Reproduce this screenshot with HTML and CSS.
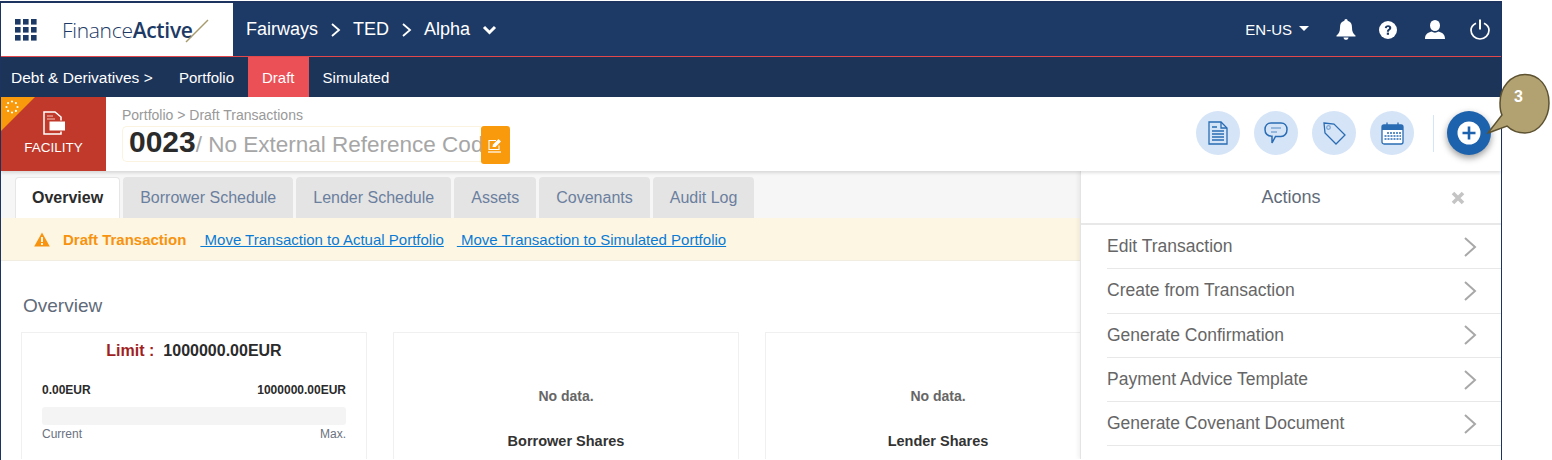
FILE: index.html
```html
<!DOCTYPE html>
<html>
    <head>
        <title>FinanceActive - Draft Transactions</title>
        <link rel="stylesheet" href="styles.css">
    </head>
    <body>
        <div class="frame">
            <div class="top_bar">
                <div class="logo_box">
                    <svg class="apps_icon" width="22" height="22" viewBox="0 0 22 22" fill="#1d3a66">
                        <rect x="0" y="0" width="5.6" height="5.6"/><rect x="8" y="0" width="5.6" height="5.6"/><rect x="16" y="0" width="5.6" height="5.6"/>
                        <rect x="0" y="8" width="5.6" height="5.6"/><rect x="8" y="8" width="5.6" height="5.6"/><rect x="16" y="8" width="5.6" height="5.6"/>
                        <rect x="0" y="16" width="5.6" height="5.6"/><rect x="8" y="16" width="5.6" height="5.6"/><rect x="16" y="16" width="5.6" height="5.6"/>
                    </svg>
                    <div class="logo_text">Finance<b>Active</b></div>
                    <svg class="logo_slash" width="24" height="24" viewBox="0 0 24 24"><path d="M1 23 L23 1" stroke="#a89a6c" stroke-width="1.4"/></svg>
                </div>
                <div class="crumbs">
                    <span>Fairways</span>
                    <svg width="11" height="16" viewBox="0 0 11 16"><path d="M2 2 L9 8 L2 14" fill="none" stroke="#fff" stroke-width="1.8"/></svg>
                    <span>TED</span>
                    <svg width="11" height="16" viewBox="0 0 11 16"><path d="M2 2 L9 8 L2 14" fill="none" stroke="#fff" stroke-width="1.8"/></svg>
                    <span>Alpha</span>
                    <svg width="15" height="10" viewBox="0 0 15 10"><path d="M2 2 L7.5 7.5 L13 2" fill="none" stroke="#fff" stroke-width="3"/></svg>
                </div>
                <div class="top_tools">
                    <span class="lang">EN-US</span>
                    <span class="caret"></span>
                    <svg class="bell" width="20" height="21" viewBox="0 0 20 21" fill="#fff"><path d="M10 0 C11 0 11.6 .8 11.6 1.8 C14.8 2.6 16 5 16 8.5 C16 12.5 17 14.500 19.500 16.500 L19.500 17.500 L.5 17.500 L.5 16.500 C3 14.500 4 12.500 4 8.500 C4 5 5.200 2.600 8.400 1.800 C8.400 .8 9 0 10 0 Z"/><path d="M7.500 18.500 L12.500 18.500 C12.300 20 11.300 20.800 10 20.800 C8.700 20.800 7.700 20 7.500 18.500 Z"/></svg>
                    <svg class="help" width="18" height="18" viewBox="0 0 18 18"><circle cx="9" cy="9" r="9" fill="#fff"/><path d="M5.800 7 C5.900 5.200 7.300 4.300 9.100 4.300 C11 4.300 12.300 5.400 12.300 6.900 C12.300 8.900 9.900 8.900 9.900 10.700 L7.900 10.700 C7.900 8 10.100 8.200 10.100 7 C10.100 6.400 9.700 6 9 6 C8.300 6 7.900 6.500 7.800 7.200 Z" fill="#1d3a66"/><rect x="7.800" y="11.600" width="2.200" height="2.200" fill="#1d3a66"/></svg>
                    <svg class="user" width="20" height="19" viewBox="0 0 20 19" fill="#fff"><ellipse cx="10" cy="5.500" rx="5" ry="5.500"/><path d="M0 19 C0 14 3 12.500 6.500 11.500 C8.500 13 11.500 13 13.500 11.500 C17 12.500 20 14 20 19 Z"/></svg>
                    <svg class="power" width="20" height="21" viewBox="0 0 20 21"><path d="M6 4.200 C3 5.600 1 8 1 11.300 C1 16 5 20 10 20 C15 20 19 16 19 11.300 C19 8 17 5.600 14 4.200" fill="none" stroke="#fff" stroke-width="1.700"/><path d="M10 .5 L10 10.500" stroke="#fff" stroke-width="2"/></svg>
                </div>
            </div>
            <div class="nav_bar">
                <span class="nav_root">Debt &amp; Derivatives &gt;</span>
                <span class="nav_item">Portfolio</span>
                <span class="nav_item nav_active">Draft</span>
                <span class="nav_item">Simulated</span>
            </div>
            <div class="sub_head">
                <div class="type_tile">
                    <span class="corner"></span>
                    <svg class="spinner" width="14" height="14" viewBox="0 0 14 14" fill="#fff">
                        <circle cx="7" cy="1.500" r="1.100"/><circle cx="10.900" cy="3.100" r="1.100"/><circle cx="12.500" cy="7" r="1.100"/><circle cx="10.900" cy="10.900" r="1.100"/>
                        <circle cx="7" cy="12.500" r="1.100"/><circle cx="3.100" cy="10.900" r="1.100"/><circle cx="1.500" cy="7" r="1.100"/><circle cx="3.100" cy="3.100" r="1.100"/>
                    </svg>
                    <svg width="24" height="24" viewBox="0 0 24 24">
                        <path d="M2 1 L13 1 L19 6 L19 23 L2 23 Z" fill="none" stroke="#fff" stroke-width="1.500"/>
                        <path d="M5 5 L11 5 M5 8 L13 8" stroke="#f3c8c0" stroke-width="1"/>
                        <rect x="7" y="10" width="16.500" height="10" fill="#fff" stroke="#c0392b" stroke-width="1"/>
                    </svg>
                    <span class="tile_label">FACILITY</span>
                </div>
                <div class="title_box">
                    <div class="path_text">Portfolio &gt; Draft Transactions</div>
                    <div class="ref_row">
                        <div class="ref_field"><b>0023</b><span>/ No External Reference Code</span></div>
                        <div class="edit_btn">
                            <svg width="15" height="15" viewBox="0 0 15 15" fill="none" stroke="#fff" stroke-width="1.100"><path d="M11 7.500 L11 11.500 L1 11.500 L1 2.500 L8 2.500"/><path d="M4.500 9 L5 6.500 L10.500 1 L13 3.500 L7.500 9 Z" fill="#fff" stroke="none"/><path d="M0 14 L13 14" stroke-width="1.200"/></svg>
                        </div>
                    </div>
                </div>
                <div class="round_tools">
                    <span class="round_btn">
                        <svg width="20" height="24" viewBox="0 0 20 24" fill="none" stroke="#2a6cb4" stroke-width="1.300"><path d="M1 1 L13 1 L19 7 L19 23 L1 23 Z"/><path d="M13 1 L13 7 L19 7"/><path d="M4 6 L9 6 M4 10 L16 10 M4 13 L16 13 M4 16 L16 16 M4 19 L16 19"/></svg>
                    </span>
                    <span class="round_btn">
                        <svg width="24" height="23" viewBox="0 0 24 23" fill="none" stroke="#2a6cb4" stroke-width="1.500"><path d="M7 1 L17 1 C20.500 1 23 3.500 23 7.500 C23 11.500 20.500 14.500 17 14.500 L11.500 14.500 L8 21 L8 14.300 C3.500 14 1 11.500 1 7.500 C1 3.500 3.500 1 7 1 Z"/><path d="M7 6 L17 6 M7 10 L13 10" stroke="#7fa8d6"/></svg>
                    </span>
                    <span class="round_btn">
                        <svg width="23" height="23" viewBox="0 0 23 23" fill="none" stroke="#2a6cb4" stroke-width="1.300"><path d="M1 1 L11 2 L22 13 L13 22 L2 11 Z"/><circle cx="5.500" cy="5.500" r="1.800" stroke="#7fa8d6"/></svg>
                    </span>
                    <span class="round_btn">
                        <svg width="23" height="23" viewBox="0 0 23 23"><rect x="1" y="3" width="21" height="19" rx="2" fill="#fff" stroke="#2a6cb4" stroke-width="1.300"/><rect x="1" y="3" width="21" height="5" fill="#2a6cb4"/><path d="M6 .5 L6 5 M17 .5 L17 5" stroke="#2a6cb4" stroke-width="1.300"/><path d="M6 11 L20 11 M3.500 14 L20 14 M3.500 17 L20 17" stroke="#2a6cb4" stroke-width="1.400" stroke-dasharray="2 1"/></svg>
                    </span>
                    <span class="tool_sep"></span>
                    <span class="add_btn">
                        <svg width="24" height="24" viewBox="0 0 24 24"><circle cx="12" cy="12" r="11.500" fill="#fff"/><path d="M12 5.500 L12 18.500 M5.500 12 L18.500 12" stroke="#1d62ad" stroke-width="2.600"/></svg>
                    </span>
                </div>
            </div>
            <div class="main_row">
                <div class="content">
                    <div class="tabs">
                        <span class="tab tab_on">Overview</span>
                        <span class="tab">Borrower Schedule</span>
                        <span class="tab">Lender Schedule</span>
                        <span class="tab">Assets</span>
                        <span class="tab">Covenants</span>
                        <span class="tab">Audit Log</span>
                    </div>
                    <div class="alert">
                        <svg width="16" height="15" viewBox="0 0 16 15"><path d="M8 .5 L15.800 14.500 L.2 14.500 Z" fill="#f7930e"/><path d="M8 5 L8 10 M8 11 L8 13" stroke="#fff" stroke-width="1.800"/></svg>
                        <span class="alert_title">Draft Transaction</span>
                        <a class="alert_link" href="#">&nbsp;Move Transaction to Actual Portfolio</a>
                        <a class="alert_link" href="#">&nbsp;Move Transaction to Simulated Portfolio</a>
                    </div>
                    <h2 class="section_title">Overview</h2>
                    <div class="cards">
                        <div class="card">
                            <div class="limit"><span class="limit_label">Limit :</span><span>1000000.00EUR</span></div>
                            <div class="bar_values"><span>0.00EUR</span><span>1000000.00EUR</span></div>
                            <div class="bar"></div>
                            <div class="bar_labels"><span>Current</span><span>Max.</span></div>
                        </div>
                        <div class="card card_empty">
                            <div class="no_data">No data.</div>
                            <div class="card_name">Borrower Shares</div>
                        </div>
                        <div class="card card_empty">
                            <div class="no_data">No data.</div>
                            <div class="card_name">Lender Shares</div>
                        </div>
                    </div>
                </div>
                <div class="actions">
                    <div class="actions_head">
                        <span>Actions</span>
                        <svg class="close_x" width="14" height="14" viewBox="0 0 14 14"><path d="M2 2 L12 12 M12 2 L2 12" stroke="#c4c4c4" stroke-width="3.600"/></svg>
                    </div>
                    <div class="action_row">Edit Transaction<svg width="14" height="22" viewBox="0 0 14 22"><path d="M2 2 L12 11 L2 20" fill="none" stroke="#a8a8a8" stroke-width="2"/></svg></div>
                    <div class="action_row">Create from Transaction<svg width="14" height="22" viewBox="0 0 14 22"><path d="M2 2 L12 11 L2 20" fill="none" stroke="#a8a8a8" stroke-width="2"/></svg></div>
                    <div class="action_row">Generate Confirmation<svg width="14" height="22" viewBox="0 0 14 22"><path d="M2 2 L12 11 L2 20" fill="none" stroke="#a8a8a8" stroke-width="2"/></svg></div>
                    <div class="action_row">Payment Advice Template<svg width="14" height="22" viewBox="0 0 14 22"><path d="M2 2 L12 11 L2 20" fill="none" stroke="#a8a8a8" stroke-width="2"/></svg></div>
                    <div class="action_row">Generate Covenant Document<svg width="14" height="22" viewBox="0 0 14 22"><path d="M2 2 L12 11 L2 20" fill="none" stroke="#a8a8a8" stroke-width="2"/></svg></div>
                </div>
            </div>
            <svg class="callout" width="86" height="74" viewBox="0 0 86 74">
                <path d="M38 1.500 C52 1.500 62 13 62 30 C62 45 52 60 38 60 C30 60 24 57 20 53 L1 60 L15 42 C13 38 13 34 13 30 C13 14 24 1.500 38 1.500 Z" fill="#b3a271" stroke="#5c5232" stroke-width="1.500" transform="translate(0,0)"/>
            </svg>
            <span class="callout_num">3</span>
        </div>
    </body>
</html>
```

FILE: styles.css
```css
html, body {
    margin: 0;
    background: #fff;
    overflow: hidden;
}
body {
    height: 460px;
    font-family: "Liberation Sans", Arial, sans-serif;
}
.frame {
    position: relative;
    box-sizing: border-box;
    width: 1502px;
    height: 460px;
    margin-top: 1px;
    border: solid #1d3461;
    border-width: 2px 1px 1px 1px;
    overflow: visible;
    background: #fff;
}

/* top bar */
.top_bar {
    display: flex;
    align-items: stretch;
    height: 53px;
    background: #1d3a66;
    border-bottom: 1px solid #e2474c;
    color: #fff;
}
.logo_box {
    display: flex;
    align-items: center;
    width: 232px;
    background: #fff;
    padding-left: 14px;
    box-sizing: border-box;
}
.logo_text {
    margin-left: 25px;
    font-family: "Open Sans", sans-serif;
    font-weight: 300;
    font-size: 21px;
    letter-spacing: -0.3px;
    color: #1d3a66;
}
.logo_text b {
    font-weight: 600;
}
.logo_slash {
    margin: 3px 0 0 -8px;
}
.crumbs {
    display: flex;
    align-items: center;
    gap: 12px;
    margin-left: 13px;
    font-size: 18px;
}
.top_tools {
    display: flex;
    align-items: center;
    margin-left: auto;
    padding-right: 11px;
}
.lang {
    font-size: 15px;
}
.caret {
    width: 0;
    height: 0;
    margin: -3px 0 0 7px;
    border: 5px solid transparent;
    border-top: 5px solid #fff;
    border-bottom: 0;
}
.bell { margin-left: 27px; }
.help { margin-left: 23px; }
.user { margin-left: 28px; }
.power { margin-left: 25px; }

/* module nav */
.nav_bar {
    display: flex;
    align-items: stretch;
    height: 40px;
    background: #1d3459;
    color: #fff;
    font-size: 15px;
}
.nav_root {
    display: flex;
    align-items: center;
    padding: 2px 0 0 10px;
    width: 164px;
    box-sizing: border-box;
    font-size: 15.5px;
}
.nav_item {
    display: flex;
    align-items: center;
    padding: 0 14px;
}
.nav_active {
    background: #ec5057;
}

/* transaction header */
.sub_head {
    display: flex;
    height: 74px;
    box-shadow: 0 2px 3px rgba(0, 0, 0, 0.12);
    position: relative;
    background: #fff;
}
.type_tile {
    position: relative;
    display: flex;
    flex-direction: column;
    align-items: center;
    width: 105px;
    padding-top: 14px;
    box-sizing: border-box;
    background: #c0392b;
    color: #fff;
}
.corner {
    position: absolute;
    left: 0;
    top: 0;
    border-top: 34px solid #f89a0c;
    border-right: 34px solid transparent;
}
.spinner {
    position: absolute;
    left: 4px;
    top: 3px;
}
.tile_label {
    margin-top: 5px;
    font-size: 13.5px;
}
.title_box {
    padding: 10px 0 0 16px;
}
.path_text {
    font-size: 14px;
    color: #999;
}
.ref_row {
    display: flex;
    margin-top: 3px;
}
.ref_field {
    display: flex;
    align-items: baseline;
    width: 359px;
    height: 36px;
    box-sizing: border-box;
    padding-left: 6px;
    border: 1px solid #fbf3df;
    border-right: 0;
    border-radius: 5px 0 0 5px;
    font-size: 22.500px;
    color: #a6a6a6;
    white-space: nowrap;
}
.ref_field b {
    font-size: 30px;
    line-height: 30px;
    color: #2b2b2b;
}
.edit_btn {
    display: flex;
    align-items: center;
    justify-content: center;
    width: 29px;
    height: 38px;
    background: #f89a0c;
    border-radius: 3px;
}
.round_tools {
    display: flex;
    align-items: center;
    gap: 14px;
    margin-left: auto;
    padding-right: 10px;
    padding-bottom: 2px;
}
.round_btn, .add_btn {
    display: flex;
    align-items: center;
    justify-content: center;
    width: 44px;
    height: 44px;
    border-radius: 50%;
    background: #d5e4f7;
}
.tool_sep {
    width: 1px;
    height: 37px;
    margin: 0 -1px 0 5px;
    background: #d5e4f7;
}
.add_btn {
    background: #1d62ad;
    box-shadow: 0 3px 7px rgba(0, 0, 0, 0.4);
}

/* main */
.main_row {
    display: flex;
    height: 288px;
    overflow: hidden;
}
.content {
    flex: 1;
    min-width: 0;
}
.tabs {
    display: flex;
    gap: 3px;
    height: 47px;
    box-sizing: border-box;
    padding: 6px 0 0 14px;
    background: #f6f6f6;
}
.tab {
    display: flex;
    align-items: center;
    padding: 0 17px;
    background: #e4e4e4;
    border-radius: 4px 4px 0 0;
    font-size: 16px;
    color: #6b7f9e;
}
.tab_on {
    padding: 0 16px;
    background: #fff;
    border: 1px solid #e6e6e6;
    border-bottom: 0;
    font-weight: bold;
    color: #2b2b2b;
}
.alert {
    display: flex;
    align-items: center;
    height: 43px;
    box-sizing: border-box;
    padding-left: 33px;
    background: #fdf6e3;
    border-bottom: 1px solid #f1ede0;
    font-size: 15px;
}
.alert_title {
    margin-left: 13px;
    font-weight: bold;
    color: #f7930e;
}
.alert_link {
    margin-left: 14px;
    color: #0a7bd4;
    text-decoration: underline;
    margin-right: 13px;
}
.alert_link + .alert_link {
    margin-left: 0;
}
.section_title {
    margin: 34px 0 0 22px;
    font-size: 19px;
    line-height: 22px;
    font-weight: normal;
    color: #5f6b7a;
}
.cards {
    display: flex;
    gap: 26px;
    margin: 15px 0 0 20px;
}
.card {
    width: 346px;
    height: 200px;
    box-sizing: border-box;
    padding: 9px 20px 0;
    border: 1px solid #f0f0f0;
    flex: none;
}
.limit {
    display: flex;
    justify-content: center;
    gap: 9px;
    font-size: 16px;
    font-weight: bold;
    color: #2b2b2b;
}
.limit_label {
    color: #a01f1f;
}
.bar_values {
    display: flex;
    justify-content: space-between;
    margin-top: 23px;
    font-size: 12px;
    font-weight: bold;
    color: #2b2b2b;
}
.bar {
    height: 18px;
    margin-top: 10px;
    background: #f4f4f4;
    border-radius: 3px;
}
.bar_labels {
    display: flex;
    justify-content: space-between;
    margin-top: 2px;
    font-size: 12px;
    color: #6b7280;
}
.card_empty {
    padding-top: 55px;
    text-align: center;
    font-weight: bold;
    font-size: 14px;
    color: #666;
}
.card_name {
    margin-top: 29px;
    color: #333;
    font-size: 14.500px;
}

/* actions drawer */
.actions {
    width: 421px;
    flex: none;
    background: #fff;
    border-left: 1px solid #e4e4e4;
    box-sizing: border-box;
    color: #666;
    box-shadow: -2px 0 4px rgba(0, 0, 0, 0.06);
}
.actions_head {
    display: flex;
    align-items: center;
    justify-content: center;
    position: relative;
    height: 54px;
    box-sizing: border-box;
    border-bottom: 2px solid #e8e8e8;
    font-size: 18px;
    color: #5f6b7a;
}
.close_x {
    position: absolute;
    right: 36px;
    top: 20px;
}
.action_row {
    display: flex;
    align-items: center;
    justify-content: space-between;
    height: 44.300px;
    box-sizing: border-box;
    margin-left: 26px;
    padding-right: 24px;
    border-bottom: 1px solid #e8e8e8;
    font-size: 17.500px;
}

/* help callout over the add button */
.callout {
    position: absolute;
    left: 1489px;
    top: 70px;
    transform: translate(-3px, 0);
}
.callout_num {
    position: absolute;
    left: 1513px;
    top: 85px;
    font-weight: bold;
    font-size: 16px;
    color: #fff;
}
```
